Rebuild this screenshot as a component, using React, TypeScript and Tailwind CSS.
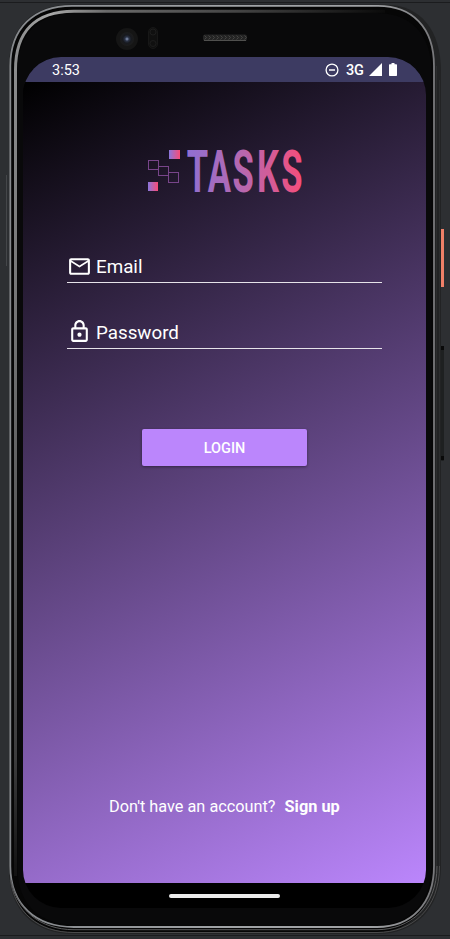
import React from "react";

function DeviceShell() {
  return (
    <svg className="absolute inset-0" width="450" height="939" viewBox="0 0 450 939" fill="none" aria-hidden="true">
      <defs>
        <linearGradient id="rim" x1="9" y1="0" x2="435" y2="0" gradientUnits="userSpaceOnUse">
          <stop offset="0" stopColor="#85888c" />
          <stop offset="0.5" stopColor="#a0a3a6" />
          <stop offset="0.85" stopColor="#a0a2a5" />
          <stop offset="1" stopColor="#77777a" />
        </linearGradient>
        <linearGradient id="inner" x1="14" y1="0" x2="385" y2="0" gradientUnits="userSpaceOnUse">
          <stop offset="0" stopColor="#8a8b8c" />
          <stop offset="0.1" stopColor="#a8a8a8" />
          <stop offset="0.25" stopColor="#6b6b6b" />
          <stop offset="0.6" stopColor="#454545" />
          <stop offset="1" stopColor="#0b0b0b" />
        </linearGradient>
        <linearGradient id="side" x1="0" y1="70" x2="0" y2="880" gradientUnits="userSpaceOnUse">
          <stop offset="0" stopColor="#8a8b8c" />
          <stop offset="0.3" stopColor="#747576" />
          <stop offset="0.85" stopColor="#3c3c3d" />
          <stop offset="1" stopColor="#101010" />
        </linearGradient>
        <radialGradient id="lens">
          <stop offset="0" stopColor="#8d9cbd" />
          <stop offset="0.3" stopColor="#2b3346" />
          <stop offset="0.6" stopColor="#17191e" />
          <stop offset="1" stopColor="#1c1c1c" />
        </radialGradient>
      </defs>
      <path d="M0 2.5H450" stroke="#1b1c1e" />
      <path d="M0 935.5H450" stroke="#1b1c1e" />
      <path d="M6.5 175V266" stroke="#45474a" />
      <path d="M9 870V66C9 26 34 4.500 72 4.500H385C421 5 441 30 441 72V866C441 910 414 934 377 934H74C34 934 9 910 9 870Z" fill="#222324" />
      <path d="M10.300 870V66C10.300 28 34 5.800 72 5.800H378C412 5.800 434 27 434 66V866C434 905 412 932 377 932H74C36 932 10.300 908 10.300 870Z" fill="#060606" />
      <path d="M10.300 866V66C10.300 28 34 5.800 72 5.800H378C412 5.800 434 27 434 66V866C434 903 412 927 377 927H74C36 927 10.300 905 10.300 866" stroke="url(#rim)" strokeWidth="1.800" />
      <path d="M15.500 70V876" stroke="url(#side)" strokeWidth="3" />
      <path d="M15.500 71V70C15.500 32 35 11.200 74 11.200H385" stroke="url(#inner)" strokeWidth="3" />
      <path d="M10.300 880C15 912 38 932.500 74 932.500H377C412 932.500 439.500 909 439.500 866" stroke="#4b4b4c" />
      <path d="M11 880C17 910 40 929.700 74 929.700H377C410 929.700 437 907 437 866" stroke="#5c5c5d" />
      <path d="M436.500 66V866M439.500 80V866" stroke="#2c2d2e" />
      <path d="M17.500 868V71C17.500 34 38 13 76 13H377C410 13 431.500 34 431.500 71V866C431.500 902 410 925 377 925H76C38 925 17.500 903 17.500 868Z" fill="#09090a" />
      <circle cx="127" cy="39" r="11" fill="#151515" />
      <circle cx="127" cy="39" r="7" fill="url(#lens)" />
      <rect x="148.500" y="27.500" width="9" height="21" rx="4.500" fill="#101010" stroke="#171717" />
      <circle cx="153" cy="32" r="3" stroke="#1d1d1d" />
      <circle cx="153" cy="43.500" r="3" stroke="#1d1d1d" />
      <rect x="203" y="34.500" width="44" height="6.500" rx="2" fill="#242424" />
      <path d="M204.500 35.500l2 2-2 2m4-4l2 2-2 2m4-4l2 2-2 2m4-4l2 2-2 2m4-4l2 2-2 2m4-4l2 2-2 2m4-4l2 2-2 2m4-4l2 2-2 2m4-4l2 2-2 2m4-4l2 2-2 2m4-4l2 2-2 2" stroke="#454544" />
      <path d="M204 40.500H246" stroke="#50504e" />
      <rect x="441" y="229" width="3" height="58" fill="#f08068" />
      <rect x="441" y="346" width="3" height="115" rx="1" fill="#1e2021" />
      <rect x="441" y="346" width="3" height="4" fill="#090909" />
      <rect x="441" y="456" width="3" height="4" fill="#090909" />
    </svg>
  );
}

function StatusBar() {
  return (
    <header className="flex h-[25px] items-center justify-between bg-[#3d3b62] pl-[29px] pr-[29px] pt-[3px] text-[14.5px] text-white">
      <span>3:53</span>
      <div className="mb-[3px] flex items-center">
        <svg width="14" height="14" viewBox="0 0 14 14" fill="none" stroke="white" strokeWidth="1.300">
          <circle cx="7" cy="7" r="5.900" />
          <path d="M4 7H10" />
        </svg>
        <span className="ml-[7px] mt-[2px] text-[14.5px] font-medium">3G</span>
        <svg className="ml-[5px]" width="13" height="13" viewBox="0 0 12 12" fill="white">
          <path d="M12 0V12H0Z" />
        </svg>
        <svg className="ml-[7px]" width="8" height="13" viewBox="0 0 8 13" fill="white">
          <path d="M2.500 0H5.500V1.300H7.300Q8 1.300 8 2V12.300Q8 13 7.300 13H.7Q0 13 0 12.300V2Q0 1.300 .7 1.300H2.500Z" />
        </svg>
      </div>
    </header>
  );
}

function Logo() {
  return (
    <svg className="mx-auto mt-[66px] block shrink-0 overflow-visible" width="155" height="46" viewBox="147 148 155 46" aria-label="Tasks">
      <defs>
        <linearGradient id="word" x1="322" x2="521" y1="0" y2="0" gradientUnits="userSpaceOnUse">
          <stop offset="0" stopColor="#8f70d2" />
          <stop offset="0.5" stopColor="#b967ad" />
          <stop offset="1" stopColor="#f44e7c" />
        </linearGradient>
        <linearGradient id="tile" x1="0" x2="1" y1="0" y2="0">
          <stop offset="0.05" stopColor="#8f74d8" />
          <stop offset="0.95" stopColor="#f44e7c" />
        </linearGradient>
      </defs>
      <rect x="169" y="150" width="11" height="9" fill="url(#tile)" />
      <rect x="148" y="182" width="10" height="9" fill="url(#tile)" />
      <g fill="none" stroke="#78458a">
        <rect x="148.500" y="160.500" width="10" height="9" />
        <rect x="158.500" y="166.500" width="10" height="9" />
        <rect x="168.500" y="172.500" width="10" height="10" />
      </g>
      <text transform="scale(.58 1)" x="322 358 401 443 485" y="191.700" fontFamily="Roboto, sans-serif" fontSize="59.500" fontWeight="700" fill="url(#word)">
        TASKS
      </text>
    </svg>
  );
}

function Field({ label, children }: { label: string; children: React.ReactNode }) {
  return (
    <label className="flex h-[29px] items-start border-b border-[#e6e3e9] text-[18.8px] leading-[26px]">
      {children}
      <span>{label}</span>
    </label>
  );
}

export default function App() {
  return (
    <div className="relative h-[939px] w-[450px] overflow-hidden bg-[#2d2f32] font-[Roboto,sans-serif] text-white">
      <DeviceShell />
      <div className="relative ml-[23px] pt-[57px]">
        <main className="flex h-[851px] w-[403px] flex-col overflow-hidden rounded-[38px] bg-black">
          <StatusBar />
          <section className="flex h-[801px] flex-col bg-[linear-gradient(153.3deg,#000,#bb86fc)]">
            <Logo />
            <form className="ml-[44px] mt-[60px] flex w-[315px] flex-col gap-[37px]">
              <Field label="Email">
                <svg className="mr-[4px] h-[25px] w-[25px] shrink-0" viewBox="0 0 24 24" fill="white">
                  <path d="M22 6c0-1.100-.9-2-2-2H4c-1.100 0-2 .9-2 2v12c0 1.100.9 2 2 2h16c1.100 0 2-.9 2-2V6zm-2 0l-8 5-8-5h16zm0 12H4V8l8 5 8-5v10z" />
                </svg>
              </Field>
              <Field label="Password">
                <svg className="-mt-px mr-[4px] h-[25px] w-[25px] shrink-0" viewBox="0 0 24 24" fill="white">
                  <path d="M18 8h-1V6c0-2.760-2.240-5-5-5S7 3.240 7 6v2H6c-1.100 0-2 .9-2 2v10c0 1.100.9 2 2 2h12c1.100 0 2-.9 2-2V10c0-1.100-.9-2-2-2zM9 6c0-1.660 1.340-3 3-3s3 1.340 3 3v2H9V6zm9 14H6V10h12v10zm-6-3c1.100 0 2-.9 2-2s-.9-2-2-2-2 .9-2 2 .9 2 2 2z" />
                </svg>
              </Field>
            </form>
            <button className="ml-[119px] mt-[80px] h-[37px] w-[165px] shrink-0 rounded-[2px] bg-[#bb86fc] pt-[2px] text-[14.5px] font-medium shadow-[0_1px_3px_rgba(0,0,0,0.4)]">
              LOGIN
            </button>
            <p className="mb-[65px] ml-[86px] mt-auto flex gap-[9px] whitespace-nowrap text-[16.3px] leading-[22px]">
              <span>Don't have an account?</span>
              <a className="font-bold">Sign up</a>
            </p>
          </section>
          <div className="flex h-[25px] items-center justify-center">
            <div className="h-[4px] w-[111px] rounded-full bg-[#ebebeb]" />
          </div>
        </main>
      </div>
    </div>
  );
}
